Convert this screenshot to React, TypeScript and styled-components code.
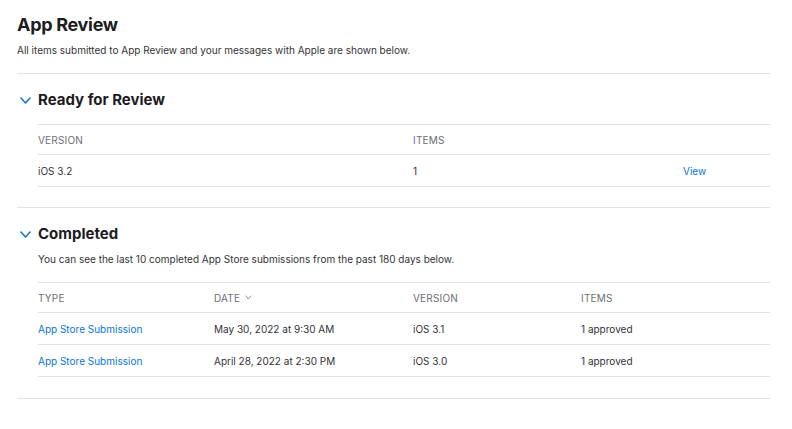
import React from "react";
import styled, { createGlobalStyle } from "styled-components";

const Global = createGlobalStyle`
  html, body { margin: 0; padding: 0; background: #fff; }
  body { font-family: Inter, "Noto Sans", "Liberation Sans", sans-serif; color: #1d1d1f; -webkit-font-smoothing: antialiased; }
`;

const Page = styled.div`
  padding: 11px 22px 0 17px;
`;

const Title = styled.h1`
  margin: 0;
  font-size: 18px;
  line-height: 27px;
  font-weight: 700;
  letter-spacing: -0.3px;
  color: #1d1d1f;
`;

const Lead = styled.p<{ $top?: number }>`
  margin: ${(p) => p.$top ?? 4}px 0 0;
  font-size: 10px;
  line-height: 16px;
  color: #333336;
`;

const Divider = styled.hr<{ $top: number }>`
  margin: ${(p) => p.$top}px 0 0;
  border: none;
  height: 1px;
  background: #e3e3e6;
`;

const Section = styled.section`
  padding-top: 16px;
`;

const SectionHeader = styled.div`
  display: flex;
  align-items: center;
  height: 20px;
`;

const Toggle = styled.span`
  width: 21px;
  display: flex;
  align-items: center;
  padding-left: 3px;
  box-sizing: border-box;
`;

const SectionTitle = styled.h2`
  margin: 0;
  font-size: 15px;
  line-height: 20px;
  font-weight: 700;
  color: #1d1d1f;
`;

const Body = styled.div`
  padding-left: 21px;
`;

const Table = styled.div<{ $top: number; $cols: string }>`
  margin-top: ${(p) => p.$top}px;
  border-top: 1px solid #e3e3e6;
  display: grid;
  grid-template-columns: ${(p) => p.$cols};
`;

const Row = styled.div<{ $h: number }>`
  display: contents;
  & > * {
    height: ${(p) => p.$h}px;
    border-bottom: 1px solid #e3e3e6;
  }
`;

const HeadCell = styled.div`
  display: flex;
  align-items: center;
  gap: 5px;
  font-size: 10px;
  letter-spacing: 0.2px;
  color: #6e6e73;
  text-transform: uppercase;
`;

const Cell = styled.div`
  display: flex;
  align-items: center;
  font-size: 10px;
  color: #333336;
`;

const Link = styled.a`
  font-size: 10px;
  color: #0a74d4;
  text-decoration: none;
  cursor: pointer;
`;

const Chevron = ({ color = "#1a73c8", w = 9, h = 5, sw = 1.6 }: { color?: string; w?: number; h?: number; sw?: number }) => (
  <svg width={w + 2} height={h + 2} viewBox={`-1 -1 ${w + 2} ${h + 2}`}>
    <polyline points={`0,0 ${w / 2},${h} ${w},0`} fill="none" stroke={color} strokeWidth={sw} strokeLinecap="round" strokeLinejoin="round" />
  </svg>
);

const completed = [
  { type: "App Store Submission", date: "May 30, 2022 at 9:30 AM", version: "iOS 3.1", items: "1 approved" },
  { type: "App Store Submission", date: "April 28, 2022 at 2:30 PM", version: "iOS 3.0", items: "1 approved" },
];

export default function App() {
  return (
    <>
      <Global />
      <Page>
        <Title>App Review</Title>
        <Lead>All items submitted to App Review and your messages with Apple are shown below.</Lead>
        <Divider $top={15} />

        <Section>
          <SectionHeader>
            <Toggle><Chevron /></Toggle>
            <SectionTitle>Ready for Review</SectionTitle>
          </SectionHeader>
          <Body>
            <Table $top={14} $cols="375px 270px 1fr">
              <Row $h={29}>
                <HeadCell>Version</HeadCell>
                <HeadCell>Items</HeadCell>
                <HeadCell />
              </Row>
              <Row $h={31}>
                <Cell>iOS 3.2</Cell>
                <Cell>1</Cell>
                <Cell><Link>View</Link></Cell>
              </Row>
            </Table>
          </Body>
        </Section>
        <Divider $top={20} />

        <Section>
          <SectionHeader>
            <Toggle><Chevron /></Toggle>
            <SectionTitle>Completed</SectionTitle>
          </SectionHeader>
          <Body>
            <Lead $top={7}>You can see the last 10 completed App Store submissions from the past 180 days below.</Lead>
            <Table $top={15} $cols="176px 199px 168px 1fr">
              <Row $h={29}>
                <HeadCell>Type</HeadCell>
                <HeadCell>Date <Chevron color="#8e8e93" w={5} h={3} sw={1} /></HeadCell>
                <HeadCell>Version</HeadCell>
                <HeadCell>Items</HeadCell>
              </Row>
              {completed.map((r, i) => (
                <Row key={i} $h={31}>
                  <Cell><Link>{r.type}</Link></Cell>
                  <Cell>{r.date}</Cell>
                  <Cell>{r.version}</Cell>
                  <Cell>{r.items}</Cell>
                </Row>
              ))}
            </Table>
          </Body>
        </Section>
        <Divider $top={21} />
      </Page>
    </>
  );
}
